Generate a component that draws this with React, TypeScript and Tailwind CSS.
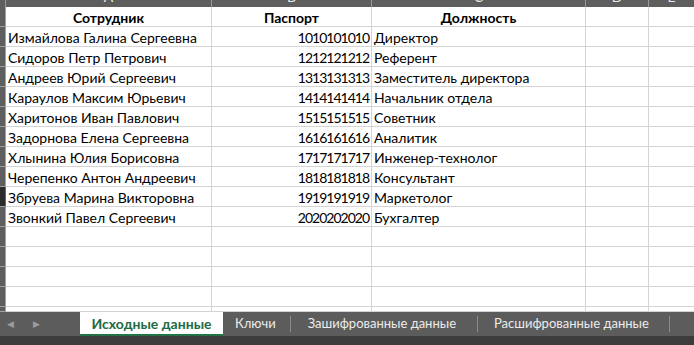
const rows: [string, string, string][] = [
  ["Измайлова Галина Сергеевна", "1010101010", "Директор"],
  ["Сидоров Петр Петрович", "1212121212", "Референт"],
  ["Андреев Юрий Сергеевич", "1313131313", "Заместитель директора"],
  ["Караулов Максим Юрьевич", "1414141414", "Начальник отдела"],
  ["Харитонов Иван Павлович", "1515151515", "Советник"],
  ["Задорнова Елена Сергеевна", "1616161616", "Аналитик"],
  ["Хлынина Юлия Борисовна", "1717171717", "Инженер-технолог"],
  ["Черепенко Антон Андреевич", "1818181818", "Консультант"],
  ["Збруева Марина Викторовна", "1919191919", "Маркетолог"],
  ["Звонкий Павел Сергеевич", "2020202020", "Бухгалтер"],
];

const cols = [
  { letter: "A", w: "w-[206px]" },
  { letter: "B", w: "w-[160px]" },
  { letter: "C", w: "w-[214px]" },
  { letter: "D", w: "w-[63px]" },
  { letter: "E", w: "flex-1" },
];

function Row({ a = "", b = "", c = "", bold = false, selected = false, h = "h-[20px]" }) {
  return (
    <div className={`flex ${h}`}>
      <div
        className={`w-[6px] shrink-0 border-b border-r ${
          selected ? "border-b-[#a0a0a0] border-r-[#2f8a55] bg-[#2b2b2b]" : "border-[#a0a0a0] bg-[#5e5e5e]"
        }`}
      />
      <div
        className={`${cols[0].w} shrink-0 truncate border-b border-r border-[#d4d4d4] px-[2px] pt-px leading-[19px] ${
          bold ? "text-center font-bold" : ""
        }`}
      >
        {a}
      </div>
      <div
        className={`${cols[1].w} shrink-0 truncate border-b border-r border-[#d4d4d4] px-[2px] pt-px leading-[19px] ${
          bold ? "text-center font-bold" : "text-right tracking-[-1px]"
        }`}
      >
        {b}
      </div>
      <div
        className={`${cols[2].w} shrink-0 truncate border-b border-r border-[#d4d4d4] px-[2px] pt-px leading-[19px] ${
          bold ? "text-center font-bold" : ""
        }`}
      >
        {c}
      </div>
      <div className={`${cols[3].w} shrink-0 border-b border-r border-[#d4d4d4]`} />
      <div className={`${cols[4].w} border-b border-[#d4d4d4]`} />
    </div>
  );
}

export default function App() {
  return (
    <div className="flex h-[345px] w-[694px] flex-col overflow-hidden bg-white font-['Lato','Noto_Sans',sans-serif] text-[14px] text-black">
      {/* column headers, cut off at the top */}
      <div className="flex h-[7px] shrink-0 bg-[#5e5e5e]">
        <div className="w-[6px] shrink-0 border-r border-[#9a9a9a]" />
        {cols.map((col, i) => (
          <div
            key={col.letter}
            className={`${col.w} shrink-0 overflow-hidden text-center ${i < 4 ? "border-r border-[#9a9a9a]" : ""}`}
          >
            <span className="-mt-[13px] block text-[14px] leading-[20px] text-[#e8e8e8]">{col.letter}</span>
          </div>
        ))}
      </div>

      <div className="flex shrink-0 flex-col">
        <Row a="Сотрудник" b="Паспорт" c="Должность" bold />
        {rows.map((r, i) => (
          <Row key={r[1]} a={r[0]} b={r[1]} c={r[2]} selected={i === 8} />
        ))}
        <Row />
        <Row />
        <Row />
        <Row />
        <Row h="h-[5px]" />
      </div>

      {/* sheet tabs */}
      <div className="flex h-[24px] shrink-0 items-stretch bg-[#5c5c5c] text-[13px] text-[#ececec]">
        <div className="flex w-[80px] shrink-0 items-center gap-[19px] pl-[7px] text-[9px] text-[#9b9b9b]">
          <span>◀</span>
          <span>▶</span>
        </div>
        <div className="flex w-[143px] shrink-0 items-center justify-center border-b-2 border-[#217346] bg-white text-[14px] font-bold text-[#1e6b41]">
          Исходные данные
        </div>
        <div className="flex items-center pl-[12px]">
          <span>Ключи</span>
          <span className="ml-[14px] h-[16px] w-px bg-[#8c8c8c]" />
          <span className="ml-[17px]">Зашифрованные данные</span>
          <span className="ml-[21px] h-[16px] w-px bg-[#8c8c8c]" />
          <span className="ml-[16px]">Расшифрованные данные</span>
          <span className="ml-[20px] h-[16px] w-px bg-[#8c8c8c]" />
        </div>
      </div>
      <div className="flex-1 bg-[#3c3c3c]" />
    </div>
  );
}
